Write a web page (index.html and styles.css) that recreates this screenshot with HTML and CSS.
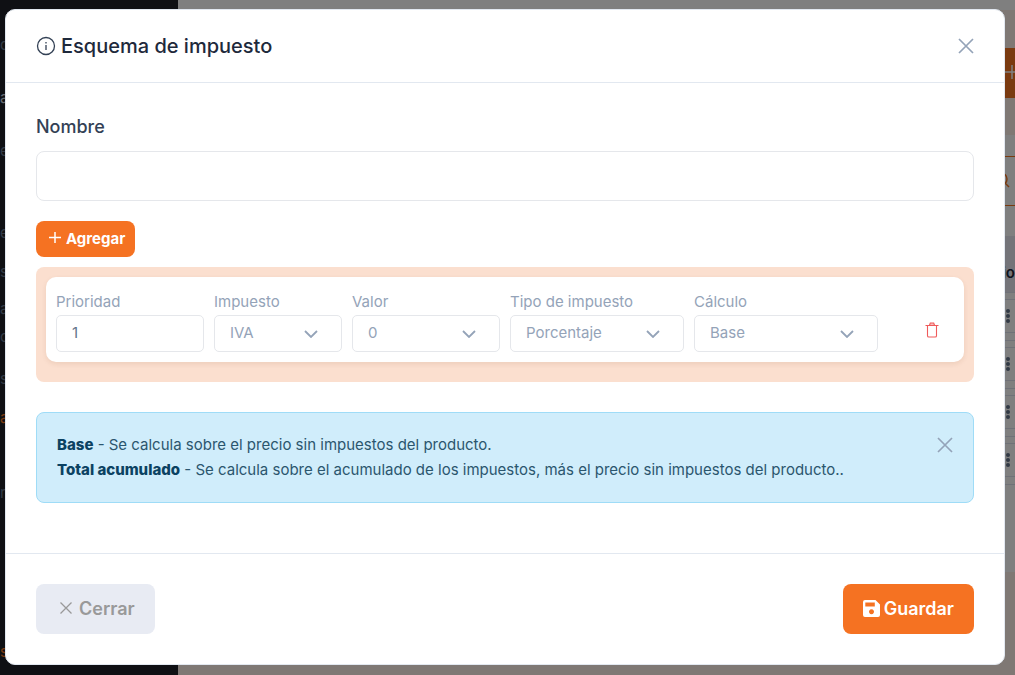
FILE: index.html
```
<!DOCTYPE html>
<html lang="es">
<head>
    <meta charset="UTF-8">
    <meta name="viewport" content="width=device-width, initial-scale=1.0">
    <title>Esquema de impuesto</title>
    <link rel="stylesheet" href="styles.css">
</head>
<body>
    <div class="page">
        <nav class="sidebar">
            <a href="#" class="menu-title">d</a>
            <a href="#" class="menu-title light">a</a>
            <a href="#" class="menu-title">e</a>
            <a href="#" class="section">e</a>
            <a href="#">s</a>
            <div class="group">
                <a href="#">ar</a>
                <a href="#">ci</a>
            </div>
            <a href="#">s</a>
            <a href="#" class="active">a</a>
            <a href="#" class="section">ra</a>
            <a href="#" class="active last">s</a>
        </nav>
        <main class="content">
            <header class="topbar"></header>
            <div class="toolbar">
                <button type="button" class="btn-new" aria-label="Nuevo">
                    <svg width="14" height="14" viewBox="0 0 14 14"><path d="M7 0v14M0 7h14" stroke="#fff" stroke-width="1.5"/></svg>
                </button>
            </div>
            <section class="panel">
                <div class="search">
                    <svg width="16" height="16" viewBox="0 0 16 16" fill="none" stroke="#f47521" stroke-width="1.5"><circle cx="7" cy="7" r="6"/><path d="M11 11l4 4"/></svg>
                </div>
                <table class="list">
                    <thead><tr><th>io</th></tr></thead>
                    <tbody>
                        <tr><td><span class="dots"><i></i><i></i><i></i></span></td></tr>
                        <tr><td><span class="dots"><i></i><i></i><i></i></span></td></tr>
                        <tr><td><span class="dots"><i></i><i></i><i></i></span></td></tr>
                        <tr><td><span class="dots"><i></i><i></i><i></i></span></td></tr>
                    </tbody>
                </table>
            </section>
        </main>
    </div>

    <div class="backdrop">
        <form class="modal" role="dialog" aria-labelledby="modalTitle">
            <div class="modal-header">
                <svg class="info" width="20" height="20" viewBox="0 0 20 20" fill="none" stroke="#334155">
                    <circle cx="10" cy="10" r="8.500" stroke-width="1.3"/>
                    <path d="M10 9v5M10 6v1.4" stroke-width="1.3"/>
                </svg>
                <h1 id="modalTitle">Esquema de impuesto</h1>
                <button type="button" class="close" aria-label="Cerrar ventana">
                    <svg width="16" height="16" viewBox="0 0 16 16"><path d="M1 1l14 14M15 1L1 15" stroke="currentColor" stroke-width="1.7"/></svg>
                </button>
            </div>

            <div class="modal-body">
                <label class="name-label" for="nombre">Nombre</label>
                <input type="text" id="nombre" class="name-input">

                <button type="button" class="btn btn-add">
                    <svg width="12" height="12" viewBox="0 0 12 12"><path d="M6 0v11M0 5.500h12" stroke="currentColor" stroke-width="1.5"/></svg>
                    Agregar
                </button>

                <div class="tax-list">
                    <div class="tax-row">
                        <div class="field">
                            <label for="prioridad">Prioridad</label>
                            <input type="text" id="prioridad" value="1">
                        </div>
                        <div class="field">
                            <label for="impuesto">Impuesto</label>
                            <select id="impuesto"><option>IVA</option></select>
                        </div>
                        <div class="field">
                            <label for="valor">Valor</label>
                            <select id="valor"><option>0</option></select>
                        </div>
                        <div class="field">
                            <label for="tipo">Tipo de impuesto</label>
                            <select id="tipo"><option>Porcentaje</option></select>
                        </div>
                        <div class="field">
                            <label for="calculo">Cálculo</label>
                            <select id="calculo"><option>Base</option></select>
                        </div>
                        <button type="button" class="btn-delete" aria-label="Eliminar">
                            <svg width="14" height="16" viewBox="0 0 14 16" fill="none" stroke="#ef5b5b" stroke-width="1.1">
                                <path d="M.5 3.500h13M2.500 3.500v10.200q0 1.300 1.300 1.300h6.400q1.300 0 1.300-1.300V3.500"/>
                                <path d="M4.500 3.300L5.300 1h3.400l.8 2.300" fill="#ef5b5b" fill-opacity=".4"/>
                            </svg>
                        </button>
                    </div>
                </div>

                <div class="alert">
                    <p>
                        <strong>Base</strong> - Se calcula sobre el precio sin impuestos del producto.<br>
                        <strong>Total acumulado</strong> - Se calcula sobre el acumulado de los impuestos, más el precio sin impuestos del producto..
                    </p>
                    <button type="button" class="close" aria-label="Ocultar aviso">
                        <svg width="16" height="16" viewBox="0 0 16 16"><path d="M1 1l14 14M15 1L1 15" stroke="currentColor" stroke-width="1.7"/></svg>
                    </button>
                </div>
            </div>

            <div class="modal-footer">
                <button type="button" class="btn btn-cancel">
                    <svg width="12" height="12" viewBox="0 0 12 12"><path d="M.5 .5l11 11M11.500 .5l-11 11" stroke="currentColor" stroke-width="1.3"/></svg>
                    Cerrar
                </button>
                <button type="submit" class="btn btn-save">
                    <svg width="17" height="17" viewBox="0 0 17 17"><path fill="currentColor" fill-rule="evenodd" d="M2 0h10.500L17 4.500V15a2 2 0 0 1-2 2H2a2 2 0 0 1-2-2V2a2 2 0 0 1 2-2zM2.300 2.500v4h9.500v-4zM8.500 9.200a2.500 2.500 0 1 0 .01 0z"/></svg>
                    Guardar
                </button>
            </div>
        </form>
    </div>
</body>
</html>
```
FILE: styles.css
```
* {
    box-sizing: border-box;
}
body {
    margin: 0;
    font-family: Inter, sans-serif;
    font-size: 15px;
    color: #334155;
}
button, input, select {
    font-family: inherit;
}
svg {
    display: block;
    flex-shrink: 0;
}

/* Page behind the modal */
.page {
    display: flex;
    height: 100vh;
    overflow: hidden;
    background-color: #fff0e8;
}
.sidebar {
    width: 178px;
    padding-top: 18px;
    background-color: #1e2128;
}
.sidebar a {
    display: block;
    height: 39px;
    line-height: 39px;
    color: #64748b;
    text-decoration: none;
}
.sidebar .menu-title {
    height: 53px;
    line-height: 53px;
}
.sidebar .light {
    color: #cbd5e1;
}
.sidebar .group {
    padding: 4px 0 8px;
}
.sidebar .group a {
    height: 28px;
    line-height: 28px;
}
.sidebar .section {
    margin-top: 36px;
}
.sidebar .active {
    color: #f47521;
}
.sidebar .last {
    margin-top: 120px;
}
.content {
    flex: 1;
}
.topbar {
    height: 10px;
    background-color: #fff;
}
.toolbar {
    display: flex;
    justify-content: flex-end;
    padding: 38px 0 37px;
}
.btn-new {
    display: flex;
    align-items: center;
    justify-content: flex-end;
    width: 120px;
    height: 50px;
    padding: 0 0 2px;
    border: none;
    background-color: #f47521;
}
.btn-new svg {
    margin-right: -4px;
}
.panel {
    height: 437px;
    padding-top: 21px;
    background-color: #fff;
}
.search {
    display: flex;
    align-items: center;
    justify-content: flex-end;
    height: 50px;
    padding: 0 5px 2px 0;
    border-top: 1px solid #f47521;
    border-bottom: 1px solid #f47521;
}
.list {
    width: 100%;
    margin-top: 30px;
    border-collapse: collapse;
}
.list th {
    height: 56px;
    padding: 18px 0 0;
    background-color: #e8e9f2;
    color: #1e293b;
    font-weight: 600;
    line-height: 20px;
    text-align: right;
}
.list th, .list td {
    border-bottom: 1px solid #dfe2ee;
}
.list td {
    height: 48px;
    padding: 6px 0 7px;
}
.dots {
    display: flex;
    flex-direction: column;
    align-items: flex-end;
    justify-content: center;
    gap: 1px;
    height: 34px;
    padding-right: 5px;
    border-top: 1px solid #dfe2ee;
    border-bottom: 1px solid #dfe2ee;
}
.dots i {
    width: 4px;
    height: 4px;
    border-radius: 50%;
    background-color: #64748b;
}

/* Modal */
.backdrop {
    position: fixed;
    inset: 0;
    padding: 9px 10px 10px 5px;
    background-color: rgba(0, 0, 0, 0.5);
    overflow: auto;
}
.modal {
    background-color: #fff;
    border: 1px solid #e2e8f0;
    border-radius: 10px;
}
.modal-header {
    display: flex;
    align-items: center;
    height: 73px;
    padding: 0 30px;
    border-bottom: 1px solid #e2e8f0;
}
.modal-header h1 {
    flex: 1;
    margin: 0 0 0 5px;
    color: #1e293b;
    font-size: 20px;
    font-weight: 500;
    line-height: 28px;
}
.close {
    padding: 0;
    border: none;
    background: none;
    color: #94a3b8;
    cursor: pointer;
}
.modal-body {
    padding: 30px 30px 50px;
}
.name-label {
    display: block;
    margin-bottom: 10px;
    font-size: 18px;
    font-weight: 500;
    line-height: 28px;
}
.name-input {
    display: block;
    width: 100%;
    height: 50px;
    padding: 0 15px;
    border: 1px solid #e5e7eb;
    border-radius: 8px;
    font-size: 16px;
}
.btn {
    display: flex;
    align-items: center;
    justify-content: center;
    border: none;
    border-radius: 8px;
    color: #fff;
    background-color: #f57222;
    cursor: pointer;
}
.btn-add {
    gap: 5px;
    height: 36px;
    margin: 20px 0 10px;
    padding: 0 10px 2px 13px;
    font-size: 15px;
    font-weight: 700;
}
.tax-list {
    padding: 10px 10px 20px;
    border-radius: 8px;
    background-color: #fbdfcf;
}
.tax-row {
    display: grid;
    grid-template-columns: 148fr 128fr 148fr 174fr 184fr 66px;
    gap: 10px;
    padding: 10px;
    border-radius: 10px;
    background-color: #fff;
    box-shadow: 0 2px 5px rgba(120, 60, 20, 0.1);
}
.field label {
    display: block;
    padding-top: 2px;
    color: #94a3b8;
    line-height: 26px;
}
.field input, .field select {
    display: block;
    width: 100%;
    height: 37px;
    padding: 0 15px 2px;
    border: 1px solid #e5e7eb;
    border-radius: 5px;
    background-color: #fff;
    color: #94a3b8;
    font-size: 15px;
}
.field input {
    color: #64748b;
}
.field select {
    appearance: none;
    background-image: url("data:image/svg+xml,%3Csvg xmlns='http://www.w3.org/2000/svg' width='14' height='8' viewBox='0 0 14 8'%3E%3Cpath d='M1 1l6 6 6-6' fill='none' stroke='%2394a3b8' stroke-width='1.8'/%3E%3C/svg%3E");
    background-repeat: no-repeat;
    background-position: right 23px center;
}
.btn-delete {
    display: flex;
    align-items: center;
    justify-content: center;
    justify-self: end;
    width: 44px;
    height: 44px;
    margin-top: 21px;
    padding: 0;
    border: none;
    background: none;
    cursor: pointer;
}
.alert {
    display: flex;
    align-items: flex-start;
    justify-content: space-between;
    margin-top: 30px;
    padding: 19px 20px 20px;
    border: 1px solid #9fdcf7;
    border-radius: 8px;
    background-color: #d0edfb;
    color: #2b566e;
}
.alert p {
    margin: 0;
    line-height: 25px;
}
.alert strong {
    color: #0b4262;
    font-weight: 800;
}
.alert .close {
    padding-top: 5px;
}
.modal-footer {
    display: flex;
    justify-content: space-between;
    padding: 30px;
    border-top: 1px solid #e2e8f0;
}
.modal-footer .btn {
    height: 50px;
    font-size: 18px;
    font-weight: 600;
}
.modal-footer .btn-cancel {
    gap: 7px;
    padding: 0 20px 2px 24px;
    background-color: #e8ebf3;
    color: #999;
}
.modal-footer .btn-save {
    gap: 4px;
    padding: 0 20px 2px;
}
```
